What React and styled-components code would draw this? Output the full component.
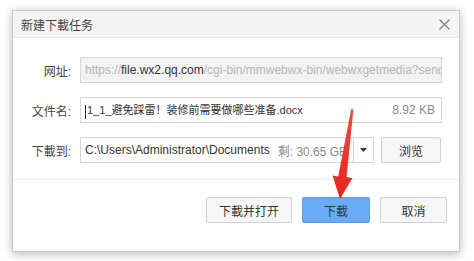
import React from 'react';
import styled, { createGlobalStyle } from 'styled-components';

const GlobalStyle = createGlobalStyle`
    body {
        margin: 0;
        background: #ffffff;
        font-family: "Liberation Sans", "Noto Sans CJK SC", sans-serif;
    }
`;

const Page = styled.div`
    width: 474px;
    height: 261px;
    padding: 10px 0 0 12px;
    box-sizing: border-box;
    overflow: hidden;
`;

const Dialog = styled.div`
    position: relative;
    width: 448px;
    height: 242px;
    box-sizing: border-box;
    background: #fff;
    border: 1px solid #c9c9c9;
    box-shadow: 0 2px 9px rgba(0, 0, 0, 0.28);
    display: flex;
    flex-direction: column;
`;

const TitleBar = styled.div`
    height: 26px;
    background: #f4f4f4;
    border-bottom: 1px solid #e4e4e4;
    display: flex;
    align-items: center;
    justify-content: space-between;
    padding: 0 9px 0 8px;
    font-size: 12px;
    color: #444;
`;

const Body = styled.div`
    padding: 19px 17px 0 0;
    display: flex;
    flex-direction: column;
    gap: 14px;
    height: 142px;
    box-sizing: border-box;
    border-bottom: 1px solid #ececec;
`;

const Row = styled.div`
    display: flex;
    align-items: center;
    height: 26px;
`;

const Label = styled.div`
    width: 58px;
    text-align: right;
    font-size: 12px;
    color: #444;
    margin-right: 9px;
`;

const Field = styled.div`
    flex: ${p => (p.$grow ? 1 : 'none')};
    width: ${p => p.$width || 'auto'};
    height: 26px;
    box-sizing: border-box;
    border: 1px solid #d6d6d6;
    background: ${p => (p.$disabled ? '#f3f3f3' : '#fff')};
    display: flex;
    align-items: center;
    justify-content: space-between;
    gap: 8px;
    padding: 0 6px 0 4px;
    font-size: 12px;
    color: #333;
    white-space: nowrap;
    overflow: hidden;
`;

const Faint = styled.span`
    color: #b5b5b5;
`;

const Dark = styled.span`
    color: #333;
`;

const Side = styled.span`
    color: #8a8a8a;
`;

const FileName = styled.span`
    font-size: 11px;
    color: #333;
`;

const Caret = styled.span`
    display: inline-block;
    width: 1px;
    height: 14px;
    background: #333;
    margin-right: 1px;
    vertical-align: middle;
`;

const Drop = styled.div`
    width: 20px;
    height: 26px;
    box-sizing: border-box;
    border: 1px solid #d6d6d6;
    border-left: none;
    display: flex;
    align-items: center;
    justify-content: center;
    background: #fff;
`;

const Button = styled.button`
    height: 26px;
    width: ${p => p.$width};
    box-sizing: border-box;
    border: 1px solid ${p => (p.$primary ? '#5a9be6' : '#d3d3d3')};
    background: ${p => (p.$primary ? '#6aabf6' : '#f6f6f6')};
    border-radius: 2px;
    font-family: inherit;
    font-size: 12px;
    color: #333;
    padding: 0;
    margin-left: ${p => p.$offset || 0};
`;

const Footer = styled.div`
    flex: 1;
    display: flex;
    justify-content: flex-end;
    align-items: flex-start;
    padding: 17px 12px 0 0;
    gap: 10px;
`;

const Arrow = styled.svg`
    position: absolute;
    left: 0;
    top: 0;
    pointer-events: none;
`;

const App = () => (
    <Page>
        <GlobalStyle />
        <Dialog>
            <TitleBar>
                <span>新建下載任务</span>
                <svg width="11" height="11" viewBox="0 0 11 11">
                    <path d="M0.5 0.5 L10.5 10.5 M10.5 0.5 L0.5 10.5" stroke="#7a7a7a" strokeWidth="1.1" />
                </svg>
            </TitleBar>
            <Body>
                <Row>
                    <Label>网址:</Label>
                    <Field $grow $disabled>
                        <span>
                            <Faint>https://</Faint>
                            <Dark>file.wx2.qq.com</Dark>
                            <Faint>/cgi-bin/mmwebwx-bin/webwxgetmedia?sende</Faint>
                        </span>
                    </Field>
                </Row>
                <Row>
                    <Label>文件名:</Label>
                    <Field $grow>
                        <FileName><Caret />1_1_避免踩雷！装修前需要做哪些准备.docx</FileName>
                        <Side>8.92 KB</Side>
                    </Field>
                </Row>
                <Row>
                    <Label>下載到:</Label>
                    <Field $width="274px">
                        <span>C:\Users\Administrator\Documents</span>
                        <Side>剩: 30.65 GB</Side>
                    </Field>
                    <Drop>
                        <svg width="7" height="4" viewBox="0 0 7 4">
                            <path d="M0 0 L7 0 L3.5 4 Z" fill="#333" />
                        </svg>
                    </Drop>
                    <Button $width="60px" $offset="7px">浏览</Button>
                </Row>
            </Body>
            <Footer>
                <Button $width="86px">下載并打开</Button>
                <Button $width="68px" $primary>下載</Button>
                <Button $width="67px">取消</Button>
            </Footer>
            <Arrow width="448" height="242" viewBox="0 0 448 242">
                <defs>
                    <linearGradient id="redg" x1="0" y1="0" x2="0" y2="1">
                        <stop offset="0" stopColor="#f04a3e" />
                        <stop offset="1" stopColor="#e2261f" />
                    </linearGradient>
                </defs>
                <path
                    d="M338.2 98 L340.4 98.5 L333.6 166 L339.5 167 L327 188 L319.5 164.5 L325.2 165.5 Z"
                    fill="url(#redg)"
                />
            </Arrow>
        </Dialog>
    </Page>
);

export default App;
